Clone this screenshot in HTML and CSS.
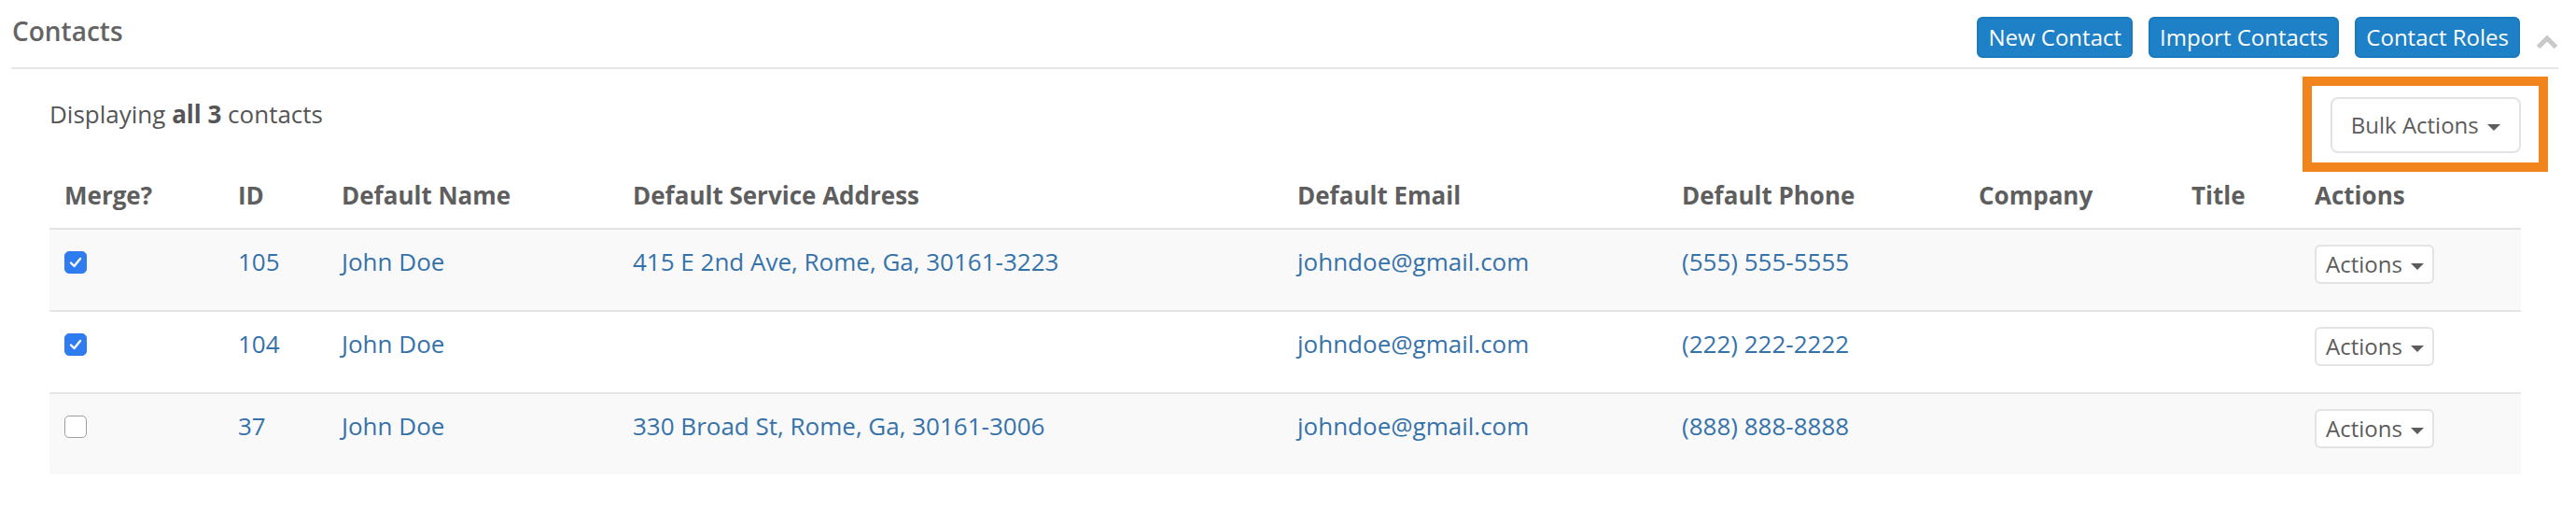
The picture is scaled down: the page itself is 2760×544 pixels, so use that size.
FILE: index.html
```html
<!DOCTYPE html>
<html lang="en">
<head>
<meta charset="utf-8">
<title>Contacts</title>
<link rel="stylesheet" href="styles.css">
</head>
<body>
<section class="panel">
  <header class="panel-heading">
    <h3 class="panel-title">Contacts</h3>
    <div class="heading-actions">
      <a class="btn btn-primary" href="#">New Contact</a>
      <a class="btn btn-primary" href="#">Import Contacts</a>
      <a class="btn btn-primary" href="#">Contact Roles</a>
      <svg class="collapse-toggle" width="24" height="16" viewBox="0 0 24 16" aria-hidden="true">
        <polyline points="2.5,13.5 12,4 21.5,13.5" fill="none" stroke="#c9c9c9" stroke-width="5" stroke-linecap="butt" stroke-linejoin="miter"/>
      </svg>
    </div>
  </header>
  <div class="panel-body">
    <div class="toolbar">
      <div class="summary">Displaying <b>all 3</b> contacts</div>
      <div class="bulk-wrap">
        <button class="btn btn-default btn-sm" type="button">Bulk Actions <span class="caret"></span></button>
        <span class="highlight"></span>
      </div>
    </div>
    <table class="table">
      <colgroup>
        <col class="c-merge"><col class="c-id"><col class="c-name"><col class="c-addr"><col class="c-email"><col class="c-phone"><col class="c-company"><col class="c-title"><col class="c-actions">
      </colgroup>
      <thead>
        <tr>
          <th>Merge?</th><th>ID</th><th>Default Name</th><th>Default Service Address</th><th>Default Email</th><th>Default Phone</th><th>Company</th><th>Title</th><th>Actions</th>
        </tr>
      </thead>
      <tbody>
        <tr class="striped">
          <td><span class="cb checked"><svg width="24" height="24" viewBox="0 0 24 24"><polyline points="7,12.5 10.5,16 17,8" fill="none" stroke="#fff" stroke-width="2.4" stroke-linecap="round" stroke-linejoin="round"/></svg></span></td>
          <td><a href="#">105</a></td>
          <td><a href="#">John Doe</a></td>
          <td><a href="#">415 E 2nd Ave, Rome, Ga, 30161-3223</a></td>
          <td><a href="#">johndoe@gmail.com</a></td>
          <td><a href="#">(555) 555-5555</a></td>
          <td></td>
          <td></td>
          <td><button class="btn btn-default btn-xs" type="button">Actions <span class="caret"></span></button></td>
        </tr>
        <tr>
          <td><span class="cb checked"><svg width="24" height="24" viewBox="0 0 24 24"><polyline points="7,12.5 10.5,16 17,8" fill="none" stroke="#fff" stroke-width="2.4" stroke-linecap="round" stroke-linejoin="round"/></svg></span></td>
          <td><a href="#">104</a></td>
          <td><a href="#">John Doe</a></td>
          <td></td>
          <td><a href="#">johndoe@gmail.com</a></td>
          <td><a href="#">(222) 222-2222</a></td>
          <td></td>
          <td></td>
          <td><button class="btn btn-default btn-xs" type="button">Actions <span class="caret"></span></button></td>
        </tr>
        <tr class="striped">
          <td><span class="cb"></span></td>
          <td><a href="#">37</a></td>
          <td><a href="#">John Doe</a></td>
          <td><a href="#">330 Broad St, Rome, Ga, 30161-3006</a></td>
          <td><a href="#">johndoe@gmail.com</a></td>
          <td><a href="#">(888) 888-8888</a></td>
          <td></td>
          <td></td>
          <td><button class="btn btn-default btn-xs" type="button">Actions <span class="caret"></span></button></td>
        </tr>
      </tbody>
    </table>
  </div>
</section>
</body>
</html>
```

FILE: styles.css
```css
* { box-sizing: border-box; }

html, body {
  margin: 0;
  padding: 0;
  background: #fff;
}

body {
  font-family: "Open Sans", "Liberation Sans", Arial, sans-serif;
  font-size: 26px;
  line-height: 37px;
  color: #555;
}

a { color: #3572aa; text-decoration: none; }

.panel-heading {
  display: flex;
  justify-content: space-between;
  align-items: flex-start;
  margin: 0 19px 0 12px;
  padding: 13px 0 10px 1px;
  border-bottom: 2px solid #e6e6e6;
}

.panel-title {
  margin: 0;
  font-size: 28px;
  line-height: 40px;
  font-weight: 600;
  color: #646464;
}

.heading-actions {
  display: flex;
  align-items: flex-start;
  gap: 17px;
  margin-top: 5px;
}

.collapse-toggle {
  display: block;
  margin-top: 19px;
}

.btn {
  display: inline-block;
  font-family: inherit;
  font-weight: 400;
  white-space: nowrap;
  border: 2px solid transparent;
  cursor: pointer;
}

.btn-primary {
  font-size: 24px;
  line-height: 36px;
  padding: 2px 10px;
  border-radius: 6px;
  color: #fff;
  background: #1e80c6;
  border-color: #1b79bc;
}

.btn-default {
  color: #5c5c5c;
  background: #fff;
  border-color: #e3e3e3;
}

.btn-sm {
  font-size: 24px;
  line-height: 36px;
  padding: 10px 20px;
  border-radius: 8px;
}

.btn-xs {
  font-size: 24px;
  line-height: 34px;
  padding: 2px 9px 2px 10px;
  border-radius: 6px;
}

.caret {
  display: inline-block;
  width: 0;
  height: 0;
  margin-left: 3px;
  vertical-align: middle;
  border-top: 7px solid #5c5c5c;
  border-left: 7px solid transparent;
  border-right: 7px solid transparent;
}

.panel-body {
  padding: 30px 59px 0 53px;
}

.toolbar {
  display: flex;
  justify-content: space-between;
  align-items: flex-start;
  margin-bottom: 11px;
}

.summary b { font-weight: 700; }

.bulk-wrap {
  position: relative;
}

.bulk-wrap .btn {
  display: block;
}

.highlight {
  position: absolute;
  top: -22px;
  bottom: -20px;
  left: -30px;
  right: -29px;
  border: 10px solid #f2841e;
  pointer-events: none;
}

.table {
  width: 100%;
  table-layout: fixed;
  border-collapse: separate;
  border-spacing: 0;
}

.c-merge { width: 186px; }
.c-id { width: 111px; }
.c-name { width: 312px; }
.c-addr { width: 712px; }
.c-email { width: 412px; }
.c-phone { width: 318px; }
.c-company { width: 228px; }
.c-title { width: 132px; }
.c-actions { width: 237px; }

.table th {
  text-align: left;
  font-weight: 700;
  color: #5e5e5e;
  padding: 16px;
  border-bottom: 2px solid #e3e3e3;
  white-space: nowrap;
}

.table td {
  padding: 16px;
  vertical-align: top;
  height: 86px;
  white-space: nowrap;
}

.table tbody tr + tr td {
  border-top: 2px solid #e6e6e6;
  height: 88px;
}

.table tr.striped td {
  background: #f9f9f9;
}

.cb {
  display: inline-block;
  width: 24px;
  height: 24px;
  margin-top: 7px;
  vertical-align: top;
  border-radius: 5px;
  background: #fff;
  border: 1.5px solid #9e9e9e;
}

.cb.checked {
  background: #2f7cf0;
  border-color: #2f7cf0;
}

.cb svg {
  display: block;
  margin: -1.5px;
}

.table td .btn-xs {
  vertical-align: top;
}
```
